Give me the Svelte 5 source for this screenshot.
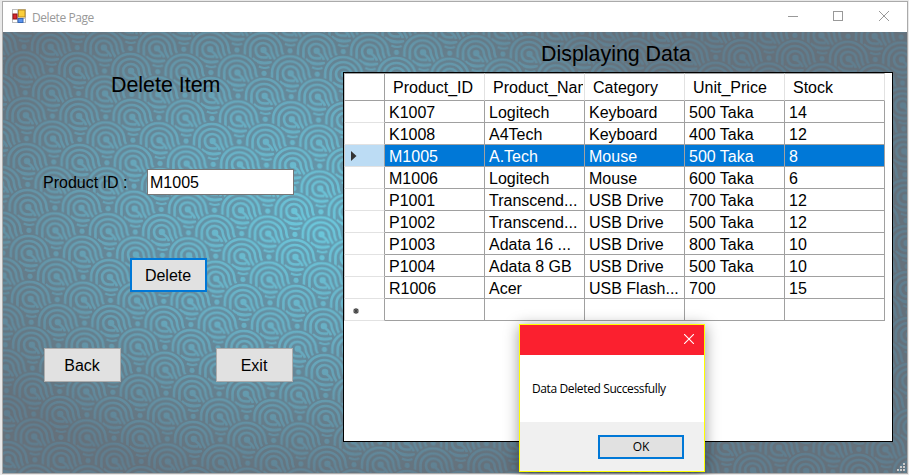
<script>
  const columns = ['Product_ID', 'Product_Name', 'Category', 'Unit_Price', 'Stock'];
  const rows = [
    ['K1007', 'Logitech', 'Keyboard', '500 Taka', '14'],
    ['K1008', 'A4Tech', 'Keyboard', '400 Taka', '12'],
    ['M1005', 'A.Tech', 'Mouse', '500 Taka', '8'],
    ['M1006', 'Logitech', 'Mouse', '600 Taka', '6'],
    ['P1001', 'Transcend...', 'USB Drive', '700 Taka', '12'],
    ['P1002', 'Transcend...', 'USB Drive', '500 Taka', '12'],
    ['P1003', 'Adata 16 ...', 'USB Drive', '800 Taka', '10'],
    ['P1004', 'Adata 8 GB', 'USB Drive', '500 Taka', '10'],
    ['R1006', 'Acer', 'USB Flash...', '700', '15'],
    ['', '', '', '', '']
  ];
  const selected = 2;
  let productId = $state('M1005');

  // Swirl centres in one wallpaper tile, upper rows first so lower ones overlap them
  const W = 53.2;
  const H = 45.9;
  const swirls = [-1, 0, 1, 2].flatMap((r) =>
    [-1, 0, 1, 2].map((c) => ({ x: c * W + (r % 2 ? W / 2 : 0), y: (r * H) / 2 }))
  );
</script>

<div class="window">
  <header class="titlebar">
    <svg class="appicon" width="15" height="15" viewBox="0 0 15 15">
      <rect x="0.5" y="0.5" width="13" height="13" fill="#fff" stroke="#bdbdbd" />
      <path d="M.5 9.500H13.500M5.500 .5V13.500" stroke="#c4c4c4" />
      <rect x="6.500" y="1" width="6.500" height="7" fill="#fbcf3c" stroke="#b98a1c" />
      <rect x="1" y="5" width="4" height="5" fill="#d8262c" stroke="#8d1418" />
      <rect x="6" y="9.500" width="5" height="4" fill="#5a93ee" stroke="#3567b4" />
    </svg>
    <span class="caption">Delete Page</span>
    <svg class="controls" width="104" height="12" viewBox="0 0 104 12" fill="none" stroke="#999">
      <path d="M0 6.500H10" />
      <rect x="45.500" y="1.500" width="9" height="9" />
      <path d="M91 1L101 11M101 1L91 11" />
    </svg>
  </header>

  <main>
    <svg class="wallpaper" width="904" height="441" viewBox="3 32 904 441">
      <defs>
        <pattern id="waves" width={W} height={H} patternUnits="userSpaceOnUse" patternTransform="matrix(1 .015 .026 1 263.500 50)">
          {#each swirls as s}
            <g transform="translate({s.x} {s.y})">
              <path d="M-22 6Q-21.500 3 -21.500 0A21.500 19.600 0 0 1 21.500 0Q22 4 25 8Z" fill="#000" />
              <g fill="none" stroke="#fff" stroke-width="2.600">
                <path d="M-19 6Q-18.700 4 -18.700 0A18.400 16.900 0 0 1 18.200 0Q18.400 4 24 10" />
                <path d="M-13.500 11Q-13.300 5 -13.300 0A13 11.900 0 0 1 12.900 0Q13.200 6 20 14" />
                <path d="M4 7.200Q-7.900 9 -7.900 0A7.700 7 0 0 1 7.600 0Q8 5 14 13" />
                <path d="M-11 8Q-6 14 8 12" stroke-width="2.200" />
                <path d="M1 2Q4 3 7 9" />
                <path d="M21.500 -6.500Q27 -3.800 32 -6M20 -11Q27 -8 34 -11" stroke-width="2.100" />
              </g>
              <circle r="3.300" fill="#fff" />
              <circle cx="26.600" cy=".3" r="2.600" fill="#fff" />
            </g>
          {/each}
        </pattern>
        <mask id="wavemask" maskUnits="userSpaceOnUse" x="3" y="32" width="904" height="441">
          <rect x="3" y="32" width="904" height="441" fill="url(#waves)" />
        </mask>
        <radialGradient id="deep" gradientUnits="userSpaceOnUse" cx="0" cy="0" r="1" gradientTransform="translate(320 225) scale(400 265)">
          <stop offset="0" stop-color="#649db2" />
          <stop offset=".45" stop-color="#658b9d" />
          <stop offset="1" stop-color="#65717b" />
        </radialGradient>
        <radialGradient id="bright" gradientUnits="userSpaceOnUse" cx="0" cy="0" r="1" gradientTransform="translate(320 225) scale(400 265)">
          <stop offset="0" stop-color="#6cc8dc" />
          <stop offset=".45" stop-color="#68acc1" />
          <stop offset="1" stop-color="#607e8f" />
        </radialGradient>
      </defs>
      <rect x="3" y="32" width="904" height="441" fill="url(#deep)" />
      <rect x="3" y="32" width="904" height="441" fill="url(#bright)" mask="url(#wavemask)" />
    </svg>

    <section class="form">
      <h1>Delete Item</h1>
      <label class="field"><span>Product ID :</span><input type="text" bind:value={productId} /></label>
      <button class="btn focus">Delete</button>
      <div class="pair">
        <button class="btn">Back</button>
        <button class="btn">Exit</button>
      </div>
    </section>

    <section class="data">
      <h2>Displaying Data</h2>
      <div class="grid">
        <div class="row head">
          <div class="marker"></div>
          {#each columns as c}<div class="cell"><div class="clip">{c}</div></div>{/each}
        </div>
        {#each rows as r, i}
          <div class="row" class:selected={i === selected}>
            <div class="marker">
              {#if i === selected}
                <svg width="6" height="10" viewBox="0 0 6 10"><path d="M0 0L5.500 5L0 10Z" fill="#333" /></svg>
              {:else if i === rows.length - 1}
                <svg class="star" width="6" height="6" viewBox="0 0 6 6"><path d="M3 0V6M0 3H6M.8 .8L5.200 5.200M5.200 .8L.8 5.200" stroke="#444" stroke-width="1.200" /></svg>
              {/if}
            </div>
            {#each r as v}<div class="cell">{v}</div>{/each}
          </div>
        {/each}
      </div>
    </section>

    <svg class="grip" width="9" height="9" viewBox="0 0 9 9" fill="#c9c9c9">
      <path d="M6 0h2v2h-2zM3 3h2v2h-2zM6 3h2v2h-2zM0 6h2v2h-2zM3 6h2v2h-2zM6 6h2v2h-2z" />
    </svg>
  </main>
</div>

<div class="dialog">
  <div class="dhead">
    <svg width="10" height="10" viewBox="0 0 10 10" stroke="#fff" stroke-width="1.100"><path d="M0 0L10 10M10 0L0 10" /></svg>
  </div>
  <div class="dbody">Data Deleted Successfully</div>
  <div class="dfoot"><button>OK</button></div>
</div>

<style>
  :global(body) { background: #e9e9e9; overflow: hidden; }
  .window, .dialog { box-sizing: border-box; }
  .window {
    width: 906px;
    height: 473px;
    margin: 1px 0 0 2px;
    border: 1px solid #aaa;
    display: flex;
    flex-direction: column;
    font-family: "Liberation Sans", Arial, sans-serif;
    color: #000;
  }
  .titlebar {
    height: 30px;
    flex: none;
    background: #fff;
    display: flex;
    align-items: center;
    padding: 0 17px 0 9px;
  }
  .appicon { margin-right: 5px; margin-top: -2px; }
  .caption { font: 12px "Open Sans", "Noto Sans", sans-serif; letter-spacing: -0.42px; color: #999; }
  .controls { margin: -2px -2px 0 auto; }
  main { position: relative; flex: 1; display: flex; overflow: hidden; }
  .wallpaper { position: absolute; left: 0; top: 0; }
  .form, .data { position: relative; }
  .form { width: 340px; display: flex; flex-direction: column; }
  h1, h2 { margin: 0; font-weight: 400; font-size: 21.400px; line-height: 24px; white-space: nowrap; }
  h1 { padding: 41px 0 0 108px; }
  .field { display: flex; align-items: center; margin: 72px 0 0 40px; font-size: 16px; height: 26px; }
  .field span { width: 104px; white-space: nowrap; padding-top: 1px; }
  input {
    box-sizing: border-box;
    width: 147px;
    height: 26px;
    border: 1px solid #777;
    padding: 1px 2px 0;
    background: #fff;
    font: 16px "Liberation Sans", Arial, sans-serif;
    color: #000;
    outline: none;
  }
  .btn {
    box-sizing: border-box;
    width: 77px;
    height: 34px;
    padding: 1px 1px 0 0;
    border: 1px solid #adadad;
    background: #e1e1e1;
    font: 16px "Liberation Sans", Arial, sans-serif;
    color: #000;
  }
  .focus { border: 2px solid #0078d7; margin: 63px 0 0 127px; }
  .pair { display: flex; justify-content: space-between; width: 249px; margin: 56px 0 0 41px; }
  .data { width: 550px; }
  h2 { padding: 10px 0 6px 198px; }
  .grid {
    box-sizing: border-box;
    width: 550px;
    height: 370px;
    border: 1px solid #000;
    background: #fff;
    font-size: 16px;
  }
  .row { display: flex; width: 541px; height: 22px; }
  .marker, .cell { box-sizing: border-box; border-right: 1px solid #a0a0a0; border-bottom: 1px solid #a0a0a0; }
  .marker { width: 41px; border-left: 1px solid #c8c8c8; border-bottom-color: #e2e2e2; display: flex; align-items: center; padding-left: 6px; }
  .cell { width: 100px; padding-left: 4px; line-height: 23px; white-space: nowrap; overflow: hidden; }
  .head { height: 28px; }
  .head .marker, .head .cell { border-top: 1px solid #a0a0a0; border-bottom-color: #a0a0a0; }
  .head .cell { padding: 0 1px 0 8px; border-right: 1px solid #e2e2e2; line-height: 27px; }
  .clip { overflow: hidden; }
  .selected .cell { background: #0078d7; color: #fff; }
  .selected .marker { background: #bcdcf4; }
  .star { margin: 2px 0 0 2px; }
  .grip { position: absolute; right: 1px; bottom: 1px; }
  .dialog {
    position: absolute;
    left: 519px;
    top: 324px;
    width: 186px;
    height: 148px;
    border: 1px solid #ff0;
    display: flex;
    flex-direction: column;
    box-shadow: 0 2px 14px rgba(0, 0, 0, .4);
    font: 12px "Open Sans", "Noto Sans", sans-serif;
    color: #000;
  }
  .dhead { height: 30px; background: #fb202f; display: flex; align-items: center; justify-content: flex-end; padding: 0 10px 2px 0; box-sizing: border-box; }
  .dbody { height: 67px; background: #fff; display: flex; align-items: center; padding-left: 12px; letter-spacing: -0.38px; white-space: nowrap; }
  .dfoot { flex: 1; background: #f0f0f0; display: flex; justify-content: flex-end; align-items: center; padding-right: 20px; }
  .dfoot button {
    box-sizing: border-box;
    width: 86px;
    height: 24px;
    padding: 0;
    border: 2px solid #0078d7;
    background: #e1e1e1;
    font: 12px "Open Sans", "Noto Sans", sans-serif;
    color: #000;
  }
</style>
